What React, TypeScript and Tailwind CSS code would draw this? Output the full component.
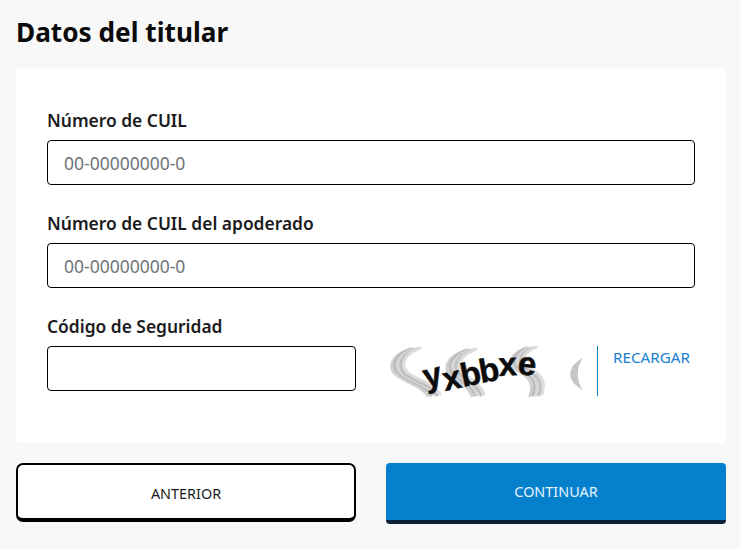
import React from 'react';

const fontStack = { fontFamily: '"Noto Sans", "Open Sans", sans-serif' };

const stripes = [
	{ dx: -6, dy: 1, color: '#d0d0d0' },
	{ dx: -3, dy: 0, color: '#bcbcbc' },
	{ dx: 0, dy: 0, color: '#d6d6d6' },
	{ dx: 3, dy: 0, color: '#c0c0c0' },
	{ dx: 6, dy: -1, color: '#dcdcdc' },
];

const Band = ({ d }: { d: string }) => (
	<g fill="none" strokeLinecap="round">
		{stripes.map((s, i) => (
			<path key={i} d={d} transform={`translate(${s.dx} ${s.dy})`} stroke={s.color} strokeWidth="3" />
		))}
	</g>
);

const letters = [
	{ c: 'y', x: 36, y: 43, r: -14 },
	{ c: 'x', x: 55, y: 46, r: -12 },
	{ c: 'b', x: 73, y: 42, r: -12 },
	{ c: 'b', x: 91, y: 38, r: -10 },
	{ c: 'x', x: 109, y: 31, r: -3 },
	{ c: 'e', x: 127, y: 29, r: 6 },
];

const Captcha = () => (
	<svg width="196" height="52" viewBox="0 0 196 52" className="shrink-0">
		<rect width="196" height="52" fill="#ffffff" />
		<Band d="M24 4 C8 10 4 20 11 28 C20 36 36 38 44 50" />
		<Band d="M80 5 C68 10 60 17 64 26 C70 34 84 38 88 50" />
		<Band d="M140 3 C128 8 124 16 130 22 C140 28 152 34 146 50" />
		<path d="M193 13 C176 22 176 36 193 45 C186 36 186 22 193 13 Z" fill="#c6c6c6" />
		{letters.map((l, i) => (
			<text
				key={i}
				x={l.x}
				y={l.y}
				transform={`rotate(${l.r} ${l.x} ${l.y})`}
				fontFamily='"Liberation Sans", sans-serif'
				fontWeight="700"
				fontSize="33"
				fill="#0c0c0c"
				stroke="#0c0c0c"
				strokeWidth="0.5"
			>
				{l.c}
			</text>
		))}
	</svg>
);

const Field = ({ label, placeholder, className }: { label: string; placeholder?: string; className?: string }) => (
	<div className={className}>
		<label className="block text-[17.4px] leading-[22px] font-semibold text-[#1b1b20] mb-[9px]">{label}</label>
		<input
			placeholder={placeholder}
			className="block w-full h-[45px] rounded-[4px] border border-black bg-white px-4 text-[17.5px] outline-none placeholder:text-[#6f7479]"
		/>
	</div>
);

const App = () => {
	return (
		<div className="w-[740px] h-[549px] overflow-hidden bg-[#f8f8f8] pl-4 pr-[14px] pt-[13px]" style={fontStack}>
			<h1 className="text-[26.2px] leading-[38px] font-bold text-[#0a0a0a]">Datos del titular</h1>
			<div className="mt-[17px] h-[375px] rounded-[4px] bg-white px-[31px] pt-[41px]">
				<Field label="Número de CUIL" placeholder="00-00000000-0" />
				<Field label="Número de CUIL del apoderado" placeholder="00-00000000-0" className="mt-[27px]" />
				<div className="mt-[27px] flex">
					<Field label="Código de Seguridad" className="w-[309px]" />
					<div className="ml-[34px] mt-[30px] flex items-start">
						<Captcha />
						<div className="ml-[11px] mt-[1px] h-[50px] w-px bg-[#0a7fcb]" />
						<button className="ml-[15px] mt-[1px] text-[15.2px] leading-[22px] text-[#1a80d0]">RECARGAR</button>
					</div>
				</div>
			</div>
			<div className="mt-[20px] flex gap-[30px]">
				<button className="h-[59px] w-[340px] rounded-[7px] border-2 border-b-[4px] border-black bg-white pt-[4px] text-[14.4px] text-[#1b1b1b]">
					ANTERIOR
				</button>
				<button className="h-[61px] w-[340px] rounded-[4px] border-b-[4px] border-[#0b2238] bg-[#0580cc] text-[14.4px] text-[#e6f3fb]">
					CONTINUAR
				</button>
			</div>
		</div>
	);
};

export default App;
